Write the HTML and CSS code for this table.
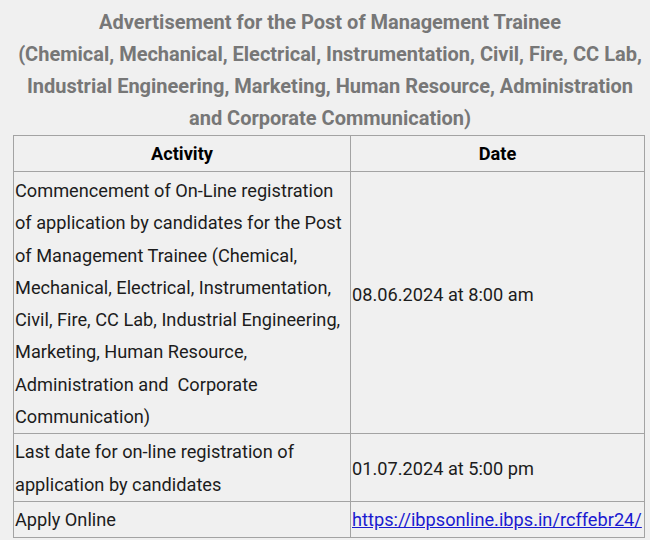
FILE: index.html
```html
<!DOCTYPE html>
<html>
<head>
<meta charset="utf-8">
<link rel="stylesheet" href="styles.css">
</head>
<body>
<div class="page">
  <h2 class="title">Advertisement for the Post of Management Trainee<br>(Chemical, Mechanical, Electrical, Instrumentation, Civil, Fire, CC Lab,<br>Industrial Engineering, Marketing, Human Resource, Administration<br>and Corporate Communication)</h2>
  <table class="sched">
    <colgroup><col class="c1"><col class="c2"></colgroup>
    <thead>
      <tr><th>Activity</th><th>Date</th></tr>
    </thead>
    <tbody>
      <tr class="r1">
        <td>Commencement of On-Line registration of application by candidates for the Post of Management Trainee (Chemical, Mechanical, Electrical, Instrumentation, Civil, Fire, CC Lab, Industrial Engineering, Marketing, Human Resource, Administration and&nbsp; Corporate Communication)</td>
        <td class="d1">08.06.2024 at 8:00 am</td>
      </tr>
      <tr class="r2">
        <td>Last date for on-line registration of application by candidates</td>
        <td>01.07.2024 at 5:00 pm</td>
      </tr>
      <tr class="r3">
        <td>Apply Online</td>
        <td><a href="#">https://ibpsonline.ibps.in/rcffebr24/</a></td>
      </tr>
    </tbody>
  </table>
</div>
</body>
</html>
```
FILE: styles.css
```css
html, body {
  margin: 0;
  padding: 0;
  background: #f0f0f0;
}
.page {
  padding: 6px 6px 0 13px;
  font-family: Roboto, "Liberation Sans", sans-serif;
}
.title {
  margin: 0 0 1px 0;
  padding-left: 3px;
  text-align: center;
  font-size: 20px;
  line-height: 32px;
  font-weight: 700;
  color: #777777;
}
.sched {
  border-collapse: collapse;
  width: 631px;
  table-layout: fixed;
  font-size: 18.2px;
  line-height: 32.3px;
  color: #1c1c1c;
}
.c1 { width: 337px; }
.c2 { width: 294px; }
.sched th, .sched td {
  border: 1px solid #a3a3a3;
  padding: 3px 1px 0 1px;
  text-align: left;
  vertical-align: middle;
}
.sched th {
  text-align: center;
  font-weight: 700;
  color: #000;
  height: 33px;
  padding: 2px 1px 0 1px;
}
.sched td.d1 { padding-bottom: 19px; }
.r2 td { padding-top: 2px; }
.r3 td { height: 33px; padding-top: 2px; padding-bottom: 0; }
.sched a {
  color: #1a1ad0;
  text-decoration: underline;
}
```
